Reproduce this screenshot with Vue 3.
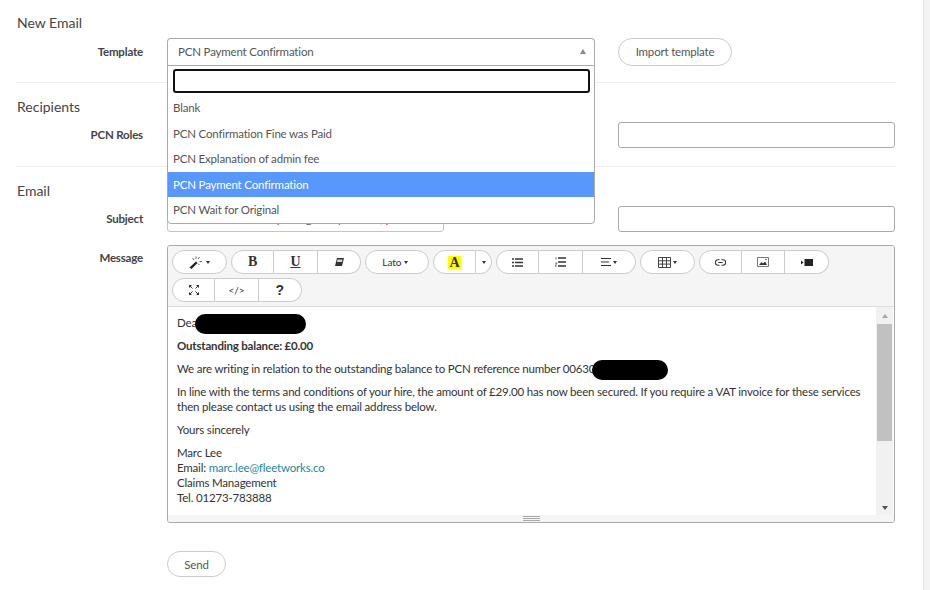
<script setup>
const options = [
  { label: 'Blank' },
  { label: 'PCN Confirmation Fine was Paid' },
  { label: 'PCN Explanation of admin fee' },
  { label: 'PCN Payment Confirmation', active: true },
  { label: 'PCN Wait for Original' }
]
</script>

<template>
  <div class="page">
    <main class="content">
      <h2 class="heading">New Email</h2>
      <div class="row row-template">
        <label class="label">Template</label>
        <div class="field select-wrap">
          <div class="select open">
            <span>PCN Payment Confirmation</span>
            <i class="caret-up"></i>
          </div>
          <div class="dropdown">
            <div class="search-wrap"><div class="search"></div></div>
            <ul class="options">
              <li v-for="o in options" :key="o.label" :class="{ active: o.active }">{{ o.label }}</li>
            </ul>
          </div>
        </div>
        <button class="pill import">Import template</button>
      </div>
      <hr class="rule rule-a" />

      <h2 class="heading">Recipients</h2>
      <div class="row">
        <label class="label">PCN Roles</label>
        <div class="field"><div class="input wide"></div></div>
        <div class="input side"></div>
      </div>
      <hr class="rule rule-b" />

      <h2 class="heading">Email</h2>
      <div class="row">
        <label class="label">Subject</label>
        <div class="field"><div class="input subject">Confirmation of fine paid against your hire, paid</div></div>
        <div class="input side"></div>
      </div>

      <div class="row row-message">
        <label class="label label-msg">Message</label>
        <div class="editor">
          <div class="toolbar">
            <div class="group">
              <button class="tb w55">
                <svg width="15" height="13" viewBox="0 0 15 13"><path d="M.5 11.500 7 5.500l1.500 1.500-6 6z" fill="#222"/><path d="M7 .5v2.500M10.500 1 9 3M3.500 2 5 4M10.500 5.500h2.500M10.500 9 9 7.500" stroke="#666" fill="none"/></svg>
                <i class="caret"></i>
              </button>
            </div>
            <div class="group">
              <button class="tb serif bold">B</button>
              <button class="tb serif bold under">U</button>
              <button class="tb">
                <svg width="10" height="9" viewBox="0 0 10 9"><path d="M3 0h7L8 8H1z" fill="#333"/><path d="M3.500 1.500h5l-.5 2.500H3z" fill="#fff" opacity=".8"/></svg>
              </button>
            </div>
            <div class="group">
              <button class="tb w64 small">Lato <i class="caret"></i></button>
            </div>
            <div class="group">
              <button class="tb serif bold"><span class="hl">A</span></button>
              <button class="tb w16"><i class="caret dark"></i></button>
            </div>
            <div class="group">
              <button class="tb">
                <svg width="11" height="9" viewBox="0 0 11 9"><path d="M0 1h2M3 1h8M0 4.500h2M3 4.500h8M0 8h2M3 8h8" stroke="#333" stroke-width="1.500"/></svg>
              </button>
              <button class="tb">
                <svg width="11" height="10" viewBox="0 0 11 10"><path d="M3 1h8M3 5h8M3 9h8" stroke="#333" stroke-width="1.400"/><path d="M1 0v2.500M0 6h2L0 9h2" stroke="#555" fill="none" stroke-width=".8"/></svg>
              </button>
              <button class="tb w53">
                <svg width="10" height="8" viewBox="0 0 10 8"><path d="M0 .5h10M0 4h8M0 7.500h10" stroke="#333"/></svg>
                <i class="caret"></i>
              </button>
            </div>
            <div class="group">
              <button class="tb w55">
                <svg width="13" height="11" viewBox="0 0 13 11"><path d="M.5.500h12v10H.5zM.5 3.800h12M.5 7.100h12M4.500 .5v10M8.500 .5v10" stroke="#333" fill="none" stroke-width=".9"/></svg>
                <i class="caret"></i>
              </button>
            </div>
            <div class="group">
              <button class="tb">
                <svg width="11" height="7" viewBox="0 0 11 7"><path d="M4.500.8H3a2.700 2.700 0 0 0 0 5.400h1.500M6.500.8H8a2.700 2.700 0 0 1 0 5.400H6.500M3.200 3.500h4.600" stroke="#333" fill="none" stroke-width="1.100"/></svg>
              </button>
              <button class="tb">
                <svg width="12" height="10" viewBox="0 0 12 10"><path d="M.5.500h11v9H.5z" stroke="#777" fill="none"/><path d="M2 8l2.500-3 1.500 1.500L8 4.500 10 8z" fill="#333"/><circle cx="9" cy="2.500" r=".8" fill="#555"/></svg>
              </button>
              <button class="tb">
                <svg width="12" height="7" viewBox="0 0 12 7"><rect x="3.500" width="8.500" height="7" fill="#222"/><path d="M0 1.500 2.500 3.500 0 5.500z" fill="#222"/></svg>
              </button>
            </div>
            <div class="group">
              <button class="tb">
                <svg width="10" height="10" viewBox="0 0 10 10"><path d="M1 1l2.500 2.500M9 1 6.500 3.500M1 9l2.500-2.500M9 9 6.500 6.500" stroke="#333"/><path d="M0 0h3L0 3zM10 0H7l3 3zM0 10h3L0 7zM10 10H7l3-3z" fill="#333"/></svg>
              </button>
              <button class="tb small">&lt;/&gt;</button>
              <button class="tb help">?</button>
            </div>
          </div>

          <div class="body">
            <div class="text">
              <p>Dear</p>
              <p><strong>Outstanding balance: £0.00</strong></p>
              <p>We are writing in relation to the outstanding balance to PCN reference number 00630</p>
              <p>In line with the terms and conditions of your hire, the amount of £29.00 has now been secured. If you require a VAT invoice for these services then please contact us using the email address below.</p>
              <p>Yours sincerely</p>
              <p>Marc Lee<br />Email: <a class="mail">marc.lee@fleetworks.co</a><br />Claims Management<br />Tel. 01273-783888</p>
            </div>
            <div class="scrollbar">
              <i class="arrow-up"></i>
              <div class="thumb"></div>
              <i class="arrow-down"></i>
            </div>
            <span class="blot blot-a"></span>
            <span class="blot blot-b"></span>
          </div>
          <div class="resizer"><span class="grip"></span></div>
        </div>
      </div>

      <div class="row row-send">
        <div class="spacer"></div>
        <button class="pill send">Send</button>
      </div>
    </main>
    <aside class="strip"></aside>
  </div>
</template>

<style scoped>
* { box-sizing: border-box; }
.page {
  display: flex;
  width: 930px;
  height: 590px;
  overflow: hidden;
  background: #fff;
  font-family: Lato, "Liberation Sans", sans-serif;
  font-size: 11.500px;
  letter-spacing: -0.18px;
  color: #444;
}
.content { width: 923px; padding: 13px 0 0 16px; flex: none; }
.strip { flex: 1; background: #f4f4f4; border-left: 1px solid #e4e4e4; }
.heading {
  margin: 0 0 5px 1px;
  font-size: 14px;
  font-weight: 400;
  letter-spacing: 0;
  line-height: 20px;
  color: #444;
}
.row { display: flex; align-items: flex-start; }
.label {
  width: 127px;
  margin-right: 24px;
  flex: none;
  text-align: right;
  font-weight: 700;
  line-height: 26px;
  color: #444;
}
.row-template .label { line-height: 28px; }
.field { width: 428px; flex: none; margin-right: 23px; }
.select-wrap { position: relative; }
.select {
  height: 28px;
  border: 1px solid #aaa;
  border-bottom-color: #bbb;
  border-radius: 4px 4px 0 0;
  padding: 0 10px 2px;
  display: flex;
  align-items: center;
  justify-content: space-between;
  color: #555;
}
.caret-up {
  width: 0; height: 0;
  border: 3.500px solid transparent;
  border-top: 0;
  border-bottom: 5px solid #888;
  margin-right: -2px;
}
.dropdown {
  position: absolute;
  z-index: 5;
  left: 0;
  top: 27px;
  width: 428px;
  height: 159px;
  background: #fff;
  border: 1px solid #aaa;
  border-radius: 0 0 4px 4px;
}
.search-wrap { padding: 3px 4px 0 5px; }
.search { height: 24px; border: 2px solid #111; border-radius: 3px; background: #fff; }
.options { list-style: none; margin: 2px 0 0; padding: 0; }
.options li {
  height: 25.600px;
  line-height: 25px;
  padding-left: 5px;
  color: #555;
}
.options li.active { background: #5897fb; color: #fff; }
.pill {
  border: 1px solid #ccc;
  border-radius: 14px;
  background: #fff;
  font: inherit;
  letter-spacing: inherit;
  color: #555;
  padding: 0;
}
.import { width: 114px; height: 28px; padding-bottom: 2px; }
.send { width: 59px; height: 26px; }
.rule { border: 0; border-top: 1px solid #eee; width: 880px; margin: 0; }
.rule-a { margin: 16px 0 14px; }
.rule-b { margin: 18px 0 14px; }
.input { height: 26px; border: 1px solid #aaa; border-radius: 3px; background: #fff; }
.wide { width: 428px; }
.side { width: 277px; flex: none; }
.subject {
  width: 277px;
  border-color: #c4c4c4;
  padding: 0 8px;
  line-height: 23px;
  white-space: nowrap;
  overflow: hidden;
  color: #555;
}
.row-message { margin-top: 13px; }
.label-msg { line-height: 26px; }
.editor {
  width: 728px;
  height: 278px;
  border: 1px solid #a9a9a9;
  border-radius: 3px;
  flex: none;
  display: flex;
  flex-direction: column;
  overflow: hidden;
}
.toolbar {
  background: #f5f5f5;
  border-bottom: 1px solid #ddd;
  padding: 4px;
  display: flex;
  flex-wrap: wrap;
  gap: 4px;
  width: 100%;
  height: 61px;
  align-content: flex-start;
}
.group { display: flex; height: 24px; }
.tb {
  width: 43.300px;
  height: 24px;
  border: 1px solid #ccc;
  border-left-width: 0;
  background: #fff;
  padding: 0;
  display: flex;
  align-items: center;
  justify-content: center;
  gap: 2px;
  color: #333;
  font: 12px Lato, sans-serif;
}
.tb:first-child { border-left-width: 1px; border-radius: 12px 0 0 12px; }
.tb:last-child { border-radius: 0 12px 12px 0; }
.tb:only-child { border-radius: 12px; }
.w55 { width: 55px; }
.w53 { width: 53px; }
.w64 { width: 64px; padding-right: 4px; }
.w16 { width: 16px; }
.small { font-size: 10px; }
.serif { font-family: "Liberation Serif", serif; font-size: 14px; }
.bold { font-weight: 700; }
.under { text-decoration: underline; }
.help { font-weight: 700; font-size: 14px; font-family: "Liberation Sans", sans-serif; }
.hl { background: #ff0; padding: 0 1px; line-height: 13px; font-size: 14px; }
.caret {
  display: inline-block;
  width: 0; height: 0;
  border: 2.500px solid transparent;
  border-top: 3px solid #333;
  border-bottom: 0;
}
.body {
  position: relative;
  flex: 1;
  display: flex;
  min-height: 0;
}
.text {
  flex: 1;
  padding: 8px 9px 0 9px;
  line-height: 15px;
  color: #333;
}
.text p { margin: 0 0 8px; }
.text strong { font-weight: 700; }
.mail { color: #23889b; }
.scrollbar {
  width: 17px;
  flex: none;
  margin-right: 1px;
  background: #f1f1f1;
  display: flex;
  flex-direction: column;
  align-items: center;
  position: relative;
  padding: 0 1px;
}
.arrow-up, .arrow-down {
  position: absolute;
  width: 0; height: 0;
  border: 3.500px solid transparent;
}
.arrow-up { top: 7px; border-top: 0; border-bottom: 4px solid #a6a6a6; }
.arrow-down { bottom: 5px; border-bottom: 0; border-top: 4px solid #505050; }
.thumb { margin-top: 17px; width: 100%; height: 117px; background: #c1c1c1; }
.blot { position: absolute; background: #000; border-radius: 10px; height: 20px; }
.blot-a { left: 27px; top: 7px; width: 111px; }
.blot-b { left: 424px; top: 53px; width: 76px; }
.resizer {
  height: 7px;
  flex: none;
  background: #f5f5f5;
  position: relative;
}
.grip {
  position: absolute;
  left: 355px;
  top: 1px;
  width: 17px;
  height: 5px;
  border-top: 1px solid #a9a9a9;
  border-bottom: 1px solid #a9a9a9;
}
.grip::after {
  content: "";
  display: block;
  margin-top: 1px;
  border-top: 1px solid #a9a9a9;
}
.row-send { margin-top: 28px; }
.spacer { width: 151px; flex: none; }
</style>
